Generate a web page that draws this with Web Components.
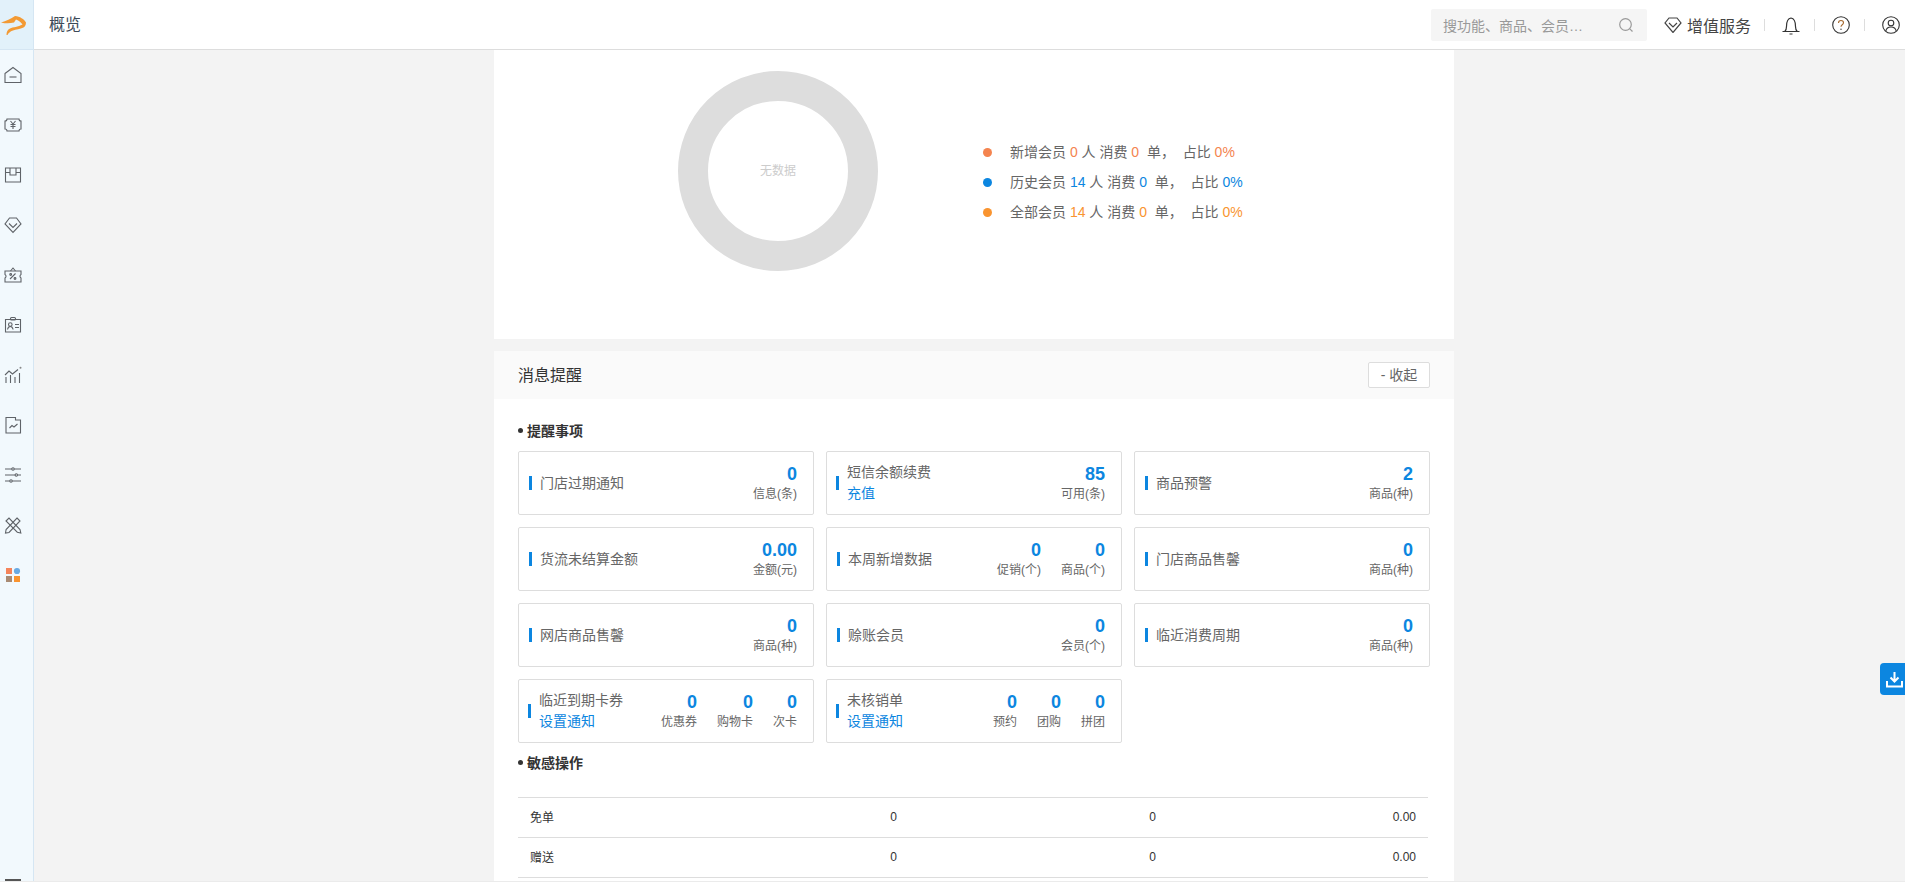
<!DOCTYPE html>
<html lang="zh-CN"><head><meta charset="utf-8"><title>概览</title>
<style>
html,body{margin:0;height:100%;overflow:hidden;background:#f3f3f3}
body{font:14px "Liberation Sans","Noto Sans CJK SC",sans-serif;color:#666}
</style></head><body>
<app-shell>
<side-nav slot="side"></side-nav>
<top-bar slot="top"></top-bar>
<member-panel></member-panel>
<message-panel></message-panel>
</app-shell>
<download-tab></download-tab>
<script>
const def=(name,html,init)=>customElements.define(name,class extends HTMLElement{
  constructor(){super();this.attachShadow({mode:'open'}).innerHTML=html;}
  connectedCallback(){init&&init.call(this,this.shadowRoot);}
});
def('app-shell',`<style>
:host{display:grid;grid-template-columns:34px 1fr;grid-template-rows:50px 1fr;height:882px;box-sizing:border-box;border-bottom:1px solid #ebebeb;overflow:hidden}
.s{grid-row:1/3;min-height:0;overflow:hidden;display:block}
.t{display:block}
.c{display:block;min-height:0;overflow:hidden;padding-left:460px}
.w{display:flex;flex-direction:column;gap:12px;width:960px}
</style><div class="s"><slot name="side"></slot></div><div class="t"><slot name="top"></slot></div>
<div class="c"><div class="w"><slot></slot></div></div>`);

const ic=(d)=>`<svg viewBox="0 0 18 18" width="18" height="18" fill="none" stroke="#5f6368" stroke-width="1.1">${d}</svg>`;
const icons=[
 '<path d="M1 7.500 9 1.500l8 6V16.500H1z"/><path d="M5.500 11h7"/>',
 '<path d="M3 3h12a2 2 0 0 0 2 2v8a2 2 0 0 0-2 2H3a2 2 0 0 0-2-2V5a2 2 0 0 0 2-2z"/><path d="M6.500 5 9 8l2.500-3M9 8v5M6.500 8.500h5M6.500 10.500h5"/>',
 '<path d="M1.500 2h15v14h-15zM1.500 6.500h4.500M12 6.500h4.500"/><path d="M6 2v7h6V2"/>',
 '<path d="M5.500 2h7L17 8l-8 8.500L1 8z"/><path d="M5 7.500 9 11.500l4-4"/>',
 '<path d="M1 5h16v3.500a2 2 0 0 0 0 3.500V16H1v-4a2 2 0 0 0 0-3.500z"/><path d="M6.500 5 9 2l2.500 3"/><path d="M6 13l5.500-5.500"/><circle cx="6.700" cy="8.500" r=".9"/><circle cx="11" cy="12.500" r=".9"/>',
 '<path d="M1.500 3.500h15v12.500h-15z"/><rect x="6.500" y="1.500" width="5" height="2.500" rx="1"/><circle cx="6.300" cy="8.500" r="1.800"/><path d="M3.500 13.500c.4-2 1.500-3 2.800-3s2.400 1 2.800 3M11 8.500h4M11 11.500h4"/>',
 '<path d="M1 9l4-4 3.500 3L14 3.500"/><path d="M2 11v6M6.500 9v8M11 11v6M15.500 7v10"/><circle cx="16.500" cy="1.800" r="1" fill="#888" stroke="none"/>',
 '<path d="M2 1.500h9.500V4h5v13H2z"/><path d="M5.500 12 8 9.500l2 1.500 3.500-3"/>',
 '<path d="M1 3h16M1 9h16M1 15h16"/><circle cx="9" cy="3" r="1.200" fill="#f3f9fd"/><circle cx="12.300" cy="9" r="1.200" fill="#f3f9fd"/><circle cx="7" cy="15" r="1.200" fill="#f3f9fd"/>',
 '<path d="M2 5l3-3 11 11.500.8 3.500-3.500-.8z"/><path d="M13 2l3 3L5 16.500 1.500 17l.6-3.500z"/>',
];
const colour=`<svg viewBox="0 0 18 18" width="18" height="18"><rect x="2" y="2" width="6" height="6" fill="#f5845a"/><circle cx="13" cy="5" r="3.100" fill="#6aaae2"/><rect x="2" y="10" width="6" height="6" fill="#a98b74"/><rect x="10" y="10" width="6" height="6" fill="#f99430"/></svg>`;
def('side-nav',`<style>
:host{display:flex;flex-direction:column;height:100%;background:#f2f9fd;border-right:1px solid #d5e6f3;box-sizing:border-box}
.logo{height:50px;flex:none;background:#e2f1fa;border-bottom:1px solid #d5e6f3;box-sizing:border-box;display:flex;align-items:center;padding-left:1px}
.i{height:50px;flex:none;display:flex;align-items:center;padding-left:4px}
.l{display:flex;flex-direction:column}
.tail{height:2px;width:16px;background:#555;margin:auto 0 0 5px;flex:none}
svg{display:block}
</style><div class="logo"><svg viewBox="0 0 26 20" width="26" height="20"><path d="M0 7.500C5 6 10 4 14 1 19 1.500 23 4 25 7.500 25 10 24 11.500 22.500 12.500 19 14 15 14.500 12 15.500 9 16.500 7.500 18 6.500 20L5.500 20C5.500 17 6.500 14.500 9 13.500 12 12 17 12 21.500 9.500 20.500 8 18 5.500 15 4.500 L13 7.500C9 8.500 5 8.700 0 7.500z" fill="#f39a34"/></svg></div><div class="l" id="l"></div><div class="tail"></div>`,function(r){
 r.getElementById('l').innerHTML=icons.map(d=>`<div class="i">${ic(d)}</div>`).join('')+`<div class="i">${colour}</div>`;
});

def('top-bar',`<style>
:host{display:flex;align-items:center;height:50px;background:#fff;border-bottom:1px solid #ddd;box-sizing:border-box;padding-left:15px;font:16px "Liberation Sans","Noto Sans CJK SC",sans-serif}
.t{color:#3c4a58;flex:1;padding-bottom:3px}
.s{width:216px;height:32px;background:#f5f5f5;border-radius:2px;display:flex;align-items:center;justify-content:space-between;padding:0 13px 0 12px;box-sizing:border-box;font-size:14px;color:#999;margin-right:17px;margin-top:1px}
.v{display:flex;align-items:center;gap:5px;color:#444;width:86px;margin-right:14px;margin-top:1px;white-space:nowrap}
.sep{width:1px;height:12px;background:#ddd;flex:none;margin-top:1px}
.b{width:49px;display:flex;justify-content:flex-start;padding-left:17px;box-sizing:border-box;margin-top:1px}
.b.bell{margin-top:3px}
.b.u{width:40px}
svg{display:block;flex:none}
</style><div class="t">概览</div>
<div class="s"><span>搜功能、商品、会员…</span><svg width="16" height="16" viewBox="0 0 16 16" fill="none" stroke="#9a9a9a" stroke-width="1.200"><circle cx="7.500" cy="7.500" r="5.800"/><path d="M11.800 11.800 14.500 14.500"/></svg></div>
<div class="v"><svg width="18" height="16" viewBox="0 0 18 16" fill="none" stroke="#444" stroke-width="1.200"><path d="M5 1h8l4 5-8 9.500L1 6z"/><path d="M5 6l4 4 4-4"/></svg><span>增值服务</span></div>
<div class="sep"></div>
<div class="b bell"><svg width="18" height="20" viewBox="0 0 18 20" fill="none" stroke="#333" stroke-width="1.200"><path d="M.5 15.500h17M2.800 15.500c1-1 1.700-2.500 1.700-5 0-4 1-8 4.500-8.500 3.500.5 4.500 4.500 4.500 8.500 0 2.500.7 4 1.700 5M7.500 18h3"/></svg></div>
<div class="sep"></div>
<div class="b"><svg width="18" height="18" viewBox="0 0 18 18" fill="none" stroke="#333" stroke-width="1.100"><circle cx="9" cy="9" r="8.300"/><path d="M6.500 7c0-1.500 1-2.500 2.500-2.500s2.500 1 2.500 2.300c0 2-2.500 2-2.500 4" stroke="#a5692f"/><circle cx="9" cy="13.300" r=".7" fill="#333" stroke="none"/></svg></div>
<div class="sep"></div>
<div class="b u"><svg width="18" height="18" viewBox="0 0 18 18" fill="none" stroke="#333" stroke-width="1.100"><circle cx="9" cy="9" r="8.300"/><circle cx="9" cy="7" r="2.800"/><path d="M3.800 15c.6-2.800 2.700-4 5.200-4s4.600 1.200 5.200 4"/></svg></div>`);

def('member-panel',`<style>
:host{display:flex;background:#fff;height:289px;box-sizing:border-box;padding:21px 0 0 184px;align-items:flex-start;flex:none}
.ring{width:200px;height:200px;border-radius:50%;box-sizing:border-box;border:30px solid #ddd;padding-bottom:4px;display:flex;align-items:center;justify-content:center;color:#ccc;font-size:12px;flex:none}
ul{list-style:none;margin:71px 0 0 105px;padding:0;display:flex;flex-direction:column;gap:10px;line-height:20px;color:#666;font-size:14px}
li{display:flex;align-items:center;white-space:pre}
i{width:9px;height:9px;border-radius:50%;margin-right:18px;flex:none;background:var(--c)}
b{font-weight:400;color:var(--c)}
</style><div class="ring">无数据</div><ul>
<li style="--c:#f4844f"><i></i>新增会员 <b>0</b> 人 消费 <b>0</b>  单，  占比 <b>0%</b></li>
<li style="--c:#0c86e0"><i></i>历史会员 <b>14</b> 人 消费 <b>0</b>  单，  占比 <b>0%</b></li>
<li style="--c:#f99430"><i></i>全部会员 <b>14</b> 人 消费 <b>0</b>  单，  占比 <b>0%</b></li>
</ul>`);

def('stat-card',`<style>
:host{display:flex;align-items:center;height:64px;box-sizing:border-box;border:1px solid #ddd;border-radius:2px;padding:0 16px 0 10px;background:#fff}
.bar{width:3px;height:14px;background:#0c86e0;flex:none;margin-right:8px}
:host([two]) .bar{margin-left:-1px}
.l{flex:1;line-height:21px;color:#666;white-space:nowrap}
::slotted(a){display:block;color:#0c86e0;text-decoration:none}
.r{display:flex;gap:20px}
</style><span class="bar"></span><div class="l"><slot></slot></div><div class="r"><slot name="stat"></slot></div>`);

def('stat-num',`<style>
:host{display:flex;flex-direction:column;align-items:flex-end;white-space:nowrap}
b{font-size:18px;line-height:21px;color:#0c86e0;height:21px}
span{font-size:12px;line-height:16px;color:#666;margin-top:1px}
</style><b><slot name="n"></slot></b><span><slot></slot></span>`);

def('section-head',`<style>
:host{display:flex;align-items:center;height:20px;box-sizing:border-box;padding-bottom:2px;font-weight:700;color:#333;font-size:14px;gap:4px}
i{width:5px;height:5px;border-radius:50%;background:#333}
</style><i></i><slot></slot>`);

def('data-row',`<style>
:host{display:grid;grid-template-columns:200px 191px 259px 260px;height:40px;padding-bottom:2px;align-items:center;border-bottom:1px solid #ddd;box-sizing:border-box;font-size:12px;color:#333;width:910px}
div{padding-right:12px;text-align:right}
div:first-of-type{text-align:left;padding-left:12px}
</style><div><slot name="a"></slot></div><div><slot name="b"></slot></div><div><slot name="c"></slot></div><div><slot name="d"></slot></div>`);

const N=(n,l)=>`<stat-num slot="stat"><span slot="n">${n}</span>${l}</stat-num>`;
const cards=[
 ['门店过期通知','',[['0','信息(条)']]],
 ['短信余额续费','充值',[['85','可用(条)']]],
 ['商品预警','',[['2','商品(种)']]],
 ['货流未结算金额','',[['0.00','金额(元)']]],
 ['本周新增数据','',[['0','促销(个)'],['0','商品(个)']]],
 ['门店商品售馨','',[['0','商品(种)']]],
 ['网店商品售馨','',[['0','商品(种)']]],
 ['赊账会员','',[['0','会员(个)']]],
 ['临近消费周期','',[['0','商品(种)']]],
 ['临近到期卡券','设置通知',[['0','优惠券'],['0','购物卡'],['0','次卡']]],
 ['未核销单','设置通知',[['0','预约'],['0','团购'],['0','拼团']]],
];
def('message-panel',`<style>
:host{display:block;background:#fff;flex:none}
header{height:48px;background:#fafafa;display:flex;align-items:center;justify-content:space-between;padding:0 24px;font-size:16px;color:#333}
header span{padding-bottom:3px}
button{width:62px;height:26px;border:1px solid #ddd;border-radius:2px;background:#fff;font:14px "Liberation Sans","Noto Sans CJK SC",sans-serif;color:#666;padding:0 0 2px;display:block}
.b{padding:22px 24px 40px}
.g{display:grid;grid-template-columns:repeat(3,296px);gap:12px;margin:10px 0 10px}
.t{margin-top:24px;border-top:1px solid #ddd;width:910px}
</style><header><span>消息提醒</span><button>- 收起</button></header>
<div class="b"><section-head>提醒事项</section-head><div class="g" id="g"></div>
<section-head>敏感操作</section-head>
<div class="t"><data-row><span slot="a">免单</span><span slot="b">0</span><span slot="c">0</span><span slot="d">0.00</span></data-row>
<data-row><span slot="a">赠送</span><span slot="b">0</span><span slot="c">0</span><span slot="d">0.00</span></data-row>
</div></div>`,function(r){
 r.getElementById('g').innerHTML=cards.map(([l,a,s])=>`<stat-card ${a?'two':''}>${l}${a?`<a href="#">${a}</a>`:''}${s.map(x=>N(x[0],x[1])).join('')}</stat-card>`).join('');
});

def('download-tab',`<style>
:host{position:fixed;right:0;top:663px;width:25px;height:32px;box-sizing:border-box;padding-left:3px;background:#0c86e0;border-radius:4px 0 0 4px;display:flex;align-items:center;justify-content:center}
</style><svg width="17" height="17" viewBox="0 0 17 17" fill="none" stroke="#fff" stroke-width="2"><path d="M8.500 1v9M4.500 6.500l4 4 4-4M1 10v5.500h15V10"/></svg>`);
</script>
</body></html>
